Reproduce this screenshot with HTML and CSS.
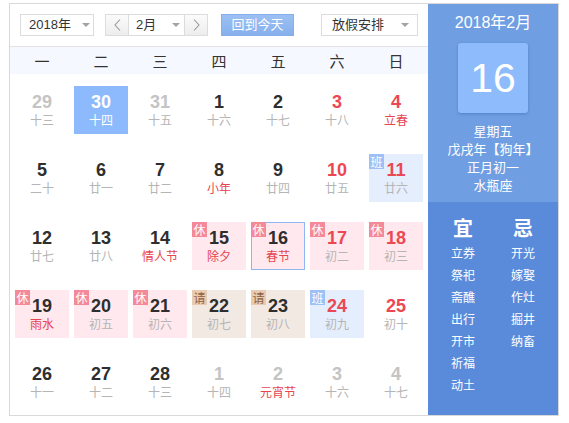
FILE: index.html
```html
<!DOCTYPE html>
<html lang="zh">
<head>
<meta charset="utf-8">
<title>万年历</title>
<link rel="stylesheet" href="styles.css">
</head>
<body>
<div class="cal">
  <div class="main">
    <div class="toolbar">
      <div class="select year"><span>2018年</span><i class="caret"></i></div>
      <div class="month-group">
        <button class="nav"><svg width="7" height="12" viewBox="0 0 7 12"><path d="M6 0.5 L1 6 L6 11.5" fill="none" stroke="#999" stroke-width="1.1"/></svg></button>
        <div class="select month"><span>2月</span><i class="caret"></i></div>
        <button class="nav"><svg width="7" height="12" viewBox="0 0 7 12"><path d="M1 0.5 L6 6 L1 11.5" fill="none" stroke="#999" stroke-width="1.1"/></svg></button>
      </div>
      <button class="today-btn">回到今天</button>
      <div class="select holiday"><span>放假安排</span><i class="caret"></i></div>
    </div>
    <div class="weekdays">
      <span>一</span><span>二</span><span>三</span><span>四</span><span>五</span><span>六</span><span>日</span>
    </div>
    <div class="grid">
      <div class="day other"><div class="num">29</div><div class="lunar">十三</div></div>
      <div class="day selected"><div class="num">30</div><div class="lunar">十四</div></div>
      <div class="day other"><div class="num">31</div><div class="lunar">十五</div></div>
      <div class="day"><div class="num">1</div><div class="lunar">十六</div></div>
      <div class="day"><div class="num">2</div><div class="lunar">十七</div></div>
      <div class="day weekend"><div class="num">3</div><div class="lunar">十八</div></div>
      <div class="day weekend"><div class="num">4</div><div class="lunar fest">立春</div></div>

      <div class="day"><div class="num">5</div><div class="lunar">二十</div></div>
      <div class="day"><div class="num">6</div><div class="lunar">廿一</div></div>
      <div class="day"><div class="num">7</div><div class="lunar">廿二</div></div>
      <div class="day"><div class="num">8</div><div class="lunar fest">小年</div></div>
      <div class="day"><div class="num">9</div><div class="lunar">廿四</div></div>
      <div class="day weekend"><div class="num">10</div><div class="lunar">廿五</div></div>
      <div class="day weekend work"><span class="tag">班</span><div class="num">11</div><div class="lunar">廿六</div></div>

      <div class="day"><div class="num">12</div><div class="lunar">廿七</div></div>
      <div class="day"><div class="num">13</div><div class="lunar">廿八</div></div>
      <div class="day"><div class="num">14</div><div class="lunar fest">情人节</div></div>
      <div class="day rest"><span class="tag">休</span><div class="num">15</div><div class="lunar fest">除夕</div></div>
      <div class="day rest today"><span class="tag">休</span><div class="num">16</div><div class="lunar fest">春节</div></div>
      <div class="day rest weekend"><span class="tag">休</span><div class="num">17</div><div class="lunar">初二</div></div>
      <div class="day rest weekend"><span class="tag">休</span><div class="num">18</div><div class="lunar">初三</div></div>

      <div class="day rest"><span class="tag">休</span><div class="num">19</div><div class="lunar fest">雨水</div></div>
      <div class="day rest"><span class="tag">休</span><div class="num">20</div><div class="lunar">初五</div></div>
      <div class="day rest"><span class="tag">休</span><div class="num">21</div><div class="lunar">初六</div></div>
      <div class="day leave"><span class="tag">请</span><div class="num">22</div><div class="lunar">初七</div></div>
      <div class="day leave"><span class="tag">请</span><div class="num">23</div><div class="lunar">初八</div></div>
      <div class="day weekend work"><span class="tag">班</span><div class="num">24</div><div class="lunar">初九</div></div>
      <div class="day weekend"><div class="num">25</div><div class="lunar">初十</div></div>

      <div class="day"><div class="num">26</div><div class="lunar">十一</div></div>
      <div class="day"><div class="num">27</div><div class="lunar">十二</div></div>
      <div class="day"><div class="num">28</div><div class="lunar">十三</div></div>
      <div class="day other"><div class="num">1</div><div class="lunar">十四</div></div>
      <div class="day other"><div class="num">2</div><div class="lunar fest">元宵节</div></div>
      <div class="day other"><div class="num">3</div><div class="lunar">十六</div></div>
      <div class="day other"><div class="num">4</div><div class="lunar">十七</div></div>
    </div>
  </div>
  <aside class="panel">
    <div class="panel-top">
      <div class="p-month">2018年2月</div>
      <div class="big-day">16</div>
      <div class="info">
        <div>星期五</div>
        <div>戊戌年【狗年】</div>
        <div>正月初一</div>
        <div>水瓶座</div>
      </div>
    </div>
    <div class="panel-bottom">
      <div class="col">
        <div class="head">宜</div>
        <div>立券</div><div>祭祀</div><div>斋醮</div><div>出行</div><div>开市</div><div>祈福</div><div>动土</div>
      </div>
      <div class="col">
        <div class="head">忌</div>
        <div>开光</div><div>嫁娶</div><div>作灶</div><div>掘井</div><div>纳畜</div>
      </div>
    </div>
  </aside>
</div>
</body>
</html>
```

FILE: styles.css
```css
body {
  margin: 0;
  background: #fff;
  font-family: "Liberation Sans", "Noto Sans CJK SC", sans-serif;
  color: #333;
}

.cal {
  display: flex;
  margin: 3px 0 0 9px;
  width: 548px;
  height: 411px;
  border: 1px solid #d9d9d9;
}

.main {
  width: 418px;
  display: flex;
  flex-direction: column;
}

.toolbar {
  box-sizing: border-box;
  height: 43px;
  padding: 10px 10px 0;
  display: flex;
  align-items: flex-start;
  border-bottom: 1px solid #e3e3e3;
}

.select {
  box-sizing: border-box;
  height: 22px;
  border: 1px solid #dcdcdc;
  background: #fff;
  display: flex;
  align-items: center;
  justify-content: space-between;
  font-size: 13px;
  line-height: 20px;
  color: #333;
}

.caret {
  width: 0;
  height: 0;
  border-left: 4px solid transparent;
  border-right: 4px solid transparent;
  border-top: 4px solid #a3a3a3;
}

.year {
  width: 74px;
  padding: 0 3px 0 8px;
}

.month-group {
  display: flex;
  margin-left: 11px;
}

.nav {
  box-sizing: border-box;
  width: 23px;
  height: 22px;
  padding: 0;
  border: 1px solid #dcdcdc;
  background: linear-gradient(#fbfbfb, #ededed);
  display: flex;
  align-items: center;
  justify-content: center;
}

.month-group .nav:first-child {
  border-right: none;
}

.month-group .nav:last-child {
  border-left: none;
}

.month {
  width: 57px;
  padding: 0 4px 0 7px;
}

.today-btn {
  box-sizing: border-box;
  margin-left: 13px;
  width: 73px;
  height: 22px;
  padding: 0;
  border: 1px solid #86aeea;
  background: linear-gradient(#9cc0f3, #86b0ec);
  color: #fff;
  font-family: "Liberation Sans", "Noto Sans CJK SC", sans-serif;
  font-size: 13px;
  line-height: 20px;
}

.holiday {
  margin-left: auto;
  width: 97px;
  padding: 0 8px 0 10px;
}

.weekdays {
  height: 27px;
  background: #f5f8fe;
  padding: 0 5px;
  display: grid;
  grid-template-columns: repeat(7, 54px);
  column-gap: 5px;
  align-items: center;
  justify-items: center;
  font-family: "Noto Sans CJK SC", sans-serif;
  font-size: 15px;
  line-height: 20px;
  color: #333;
}

.grid {
  padding: 12px 5px 0;
  display: grid;
  grid-template-columns: repeat(7, 54px);
  grid-auto-rows: 48px;
  column-gap: 5px;
  row-gap: 20px;
}

.day {
  position: relative;
  box-sizing: border-box;
  padding-top: 6px;
  text-align: center;
}

.num {
  font-size: 18px;
  font-weight: bold;
  line-height: 20px;
  color: #2e2e2e;
}

.lunar {
  margin-top: 1px;
  font-family: "Noto Sans CJK SC", sans-serif;
  font-size: 12px;
  line-height: 14px;
  color: #b5b5b5;
}

.lunar.fest {
  color: #e6454f;
}

.weekend .num {
  color: #ec4853;
}

.other .num {
  color: #c4c4c4;
}

.selected {
  background: #8cbafc;
}

.selected .num,
.selected .lunar {
  color: #fff;
}

.tag {
  position: absolute;
  left: 0;
  top: 0;
  width: 15px;
  height: 15px;
  font-family: "Noto Sans CJK SC", sans-serif;
  font-size: 12px;
  line-height: 15px;
  text-align: center;
  color: #fff;
}

.rest {
  background: #ffe9ee;
}

.rest .tag {
  background: #f4899a;
}

.today {
  border: 1px solid #8db6f2;
  padding-top: 5px;
}

.today .tag {
  left: -1px;
  top: -1px;
}

.leave {
  background: #f2e9e3;
}

.leave .tag {
  background: #e8cbb3;
  color: #8f6040;
}

.work {
  background: #e5eefd;
}

.work .tag {
  background: #9dc0f6;
}

.panel {
  width: 130px;
  display: flex;
  flex-direction: column;
  color: #fff;
  font-family: "Liberation Sans", "Noto Sans CJK SC", sans-serif;
}

.panel-top {
  height: 198px;
  background: #6f9ee2;
  display: flex;
  flex-direction: column;
  align-items: center;
  padding-top: 9px;
  box-sizing: border-box;
}

.p-month {
  font-size: 16px;
  line-height: 20px;
}

.big-day {
  margin-top: 10px;
  width: 70px;
  height: 70px;
  border-radius: 3px;
  background: #8dbbfb;
  box-shadow: 0 1px 3px rgba(40, 80, 150, 0.35);
  font-size: 41px;
  line-height: 70px;
  text-align: center;
}

.info {
  margin-top: 9px;
  text-align: center;
  font-family: "Noto Sans CJK SC", sans-serif;
  font-size: 13px;
  line-height: 18px;
}

.panel-bottom {
  flex: 1;
  background: #5a8bdb;
  padding: 14px 5px 0;
  display: grid;
  grid-template-columns: 60px 60px;
  align-items: start;
  font-family: "Noto Sans CJK SC", sans-serif;
  font-size: 12px;
  line-height: 22px;
}

.col {
  text-align: center;
}

.col .head {
  font-size: 20px;
  font-weight: bold;
  line-height: 24px;
  margin-bottom: 2px;
}
```
